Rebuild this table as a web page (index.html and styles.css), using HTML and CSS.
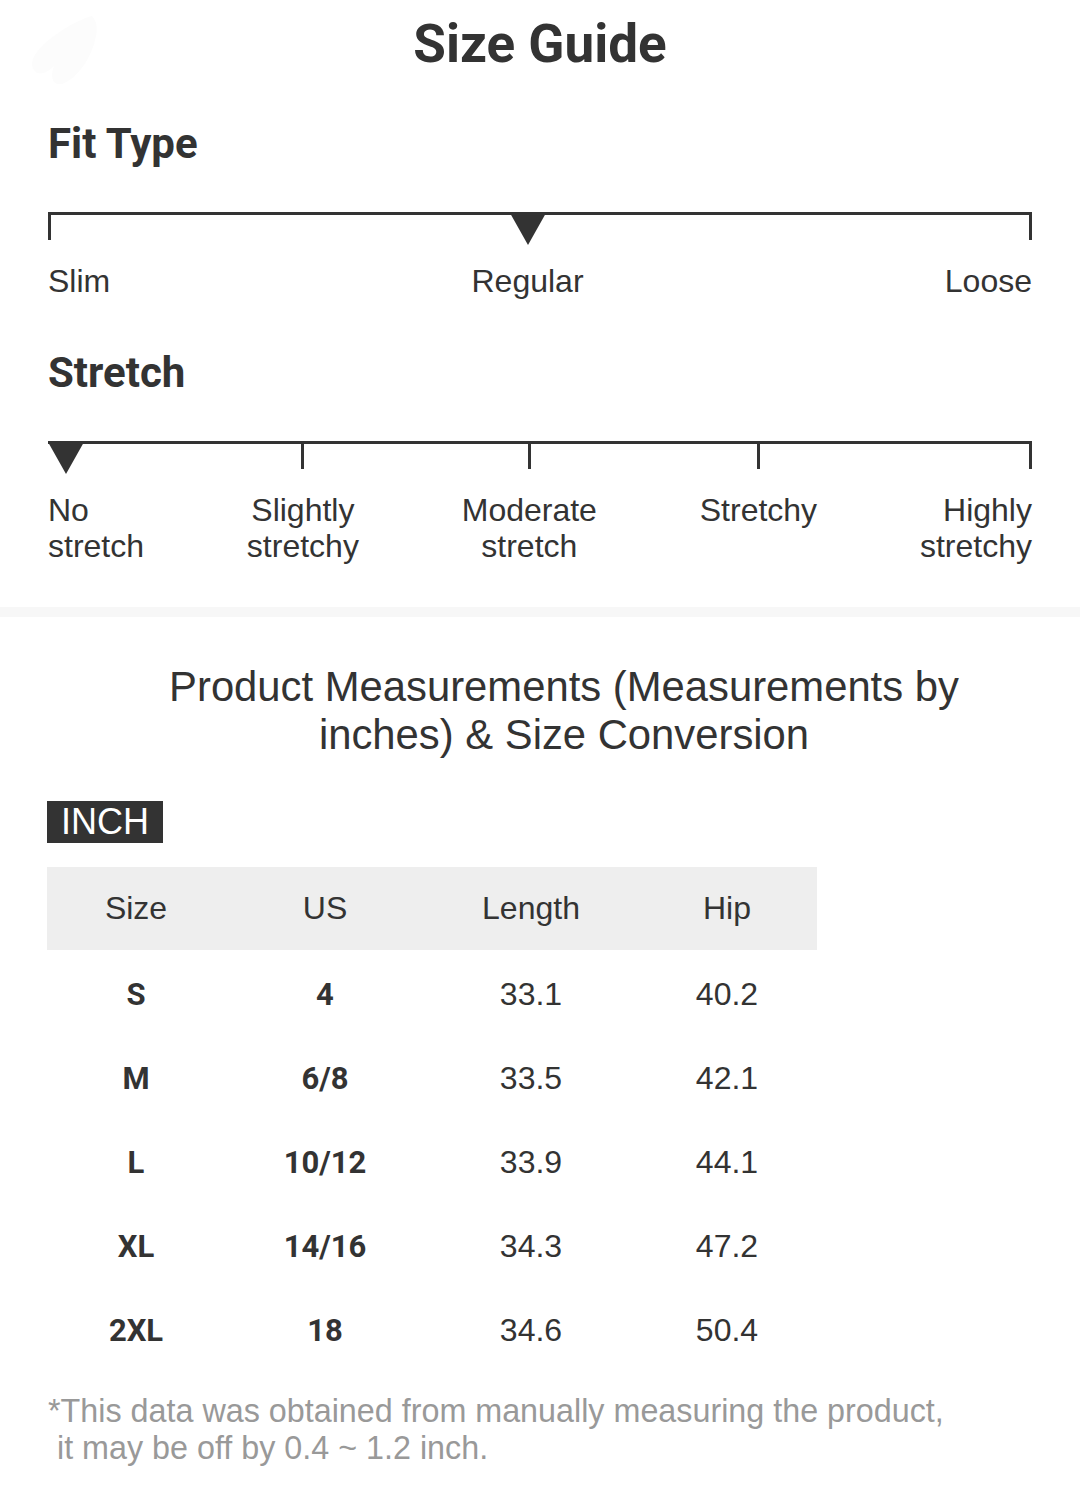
FILE: index.html
```html
<!DOCTYPE html>
<html lang="en">
<head>
<meta charset="utf-8">
<title>Size Guide</title>
<link rel="stylesheet" href="styles.css">
</head>
<body>
<div class="page">
  <svg class="ghost" width="80" height="80" viewBox="0 0 80 80" aria-hidden="true">
    <path d="M70 2 C55 6 35 18 20 32 C10 42 8 50 12 56 C16 62 24 60 32 52 C28 62 30 72 40 70 C52 66 66 50 72 30 C76 18 76 8 70 2 Z" fill="#fcfcfc"/>
  </svg>

  <section class="guide">
    <h1 class="title">Size Guide</h1>

    <h2 class="heading heading-fit">Fit Type</h2>
    <div class="scale">
      <div class="item start">
        <div class="marker"><span class="tick"></span></div>
        <div class="label">Slim</div>
      </div>
      <div class="item mid">
        <div class="marker"><span class="arrow"></span></div>
        <div class="label">Regular</div>
      </div>
      <div class="item end">
        <div class="marker"><span class="tick"></span></div>
        <div class="label">Loose</div>
      </div>
    </div>

    <h2 class="heading heading-stretch">Stretch</h2>
    <div class="scale">
      <div class="item start">
        <div class="marker"><span class="arrow"></span></div>
        <div class="label">No<br>stretch</div>
      </div>
      <div class="item mid">
        <div class="marker"><span class="tick"></span></div>
        <div class="label">Slightly<br>stretchy</div>
      </div>
      <div class="item mid">
        <div class="marker"><span class="tick"></span></div>
        <div class="label">Moderate<br>stretch</div>
      </div>
      <div class="item mid">
        <div class="marker"><span class="tick"></span></div>
        <div class="label">Stretchy</div>
      </div>
      <div class="item end">
        <div class="marker"><span class="tick"></span></div>
        <div class="label">Highly<br>stretchy</div>
      </div>
    </div>
  </section>

  <div class="band"></div>

  <section class="measure">
    <h2 class="measure-title">Product Measurements (Measurements by<br>inches) &amp; Size Conversion</h2>

    <div class="unit">INCH</div>

    <table class="sizes">
      <colgroup>
        <col class="c1"><col class="c2"><col class="c3"><col class="c4">
      </colgroup>
      <thead>
        <tr><th>Size</th><th>US</th><th>Length</th><th>Hip</th></tr>
      </thead>
      <tbody>
        <tr><td class="b">S</td><td class="b">4</td><td>33.1</td><td>40.2</td></tr>
        <tr><td class="b">M</td><td class="b">6/8</td><td>33.5</td><td>42.1</td></tr>
        <tr><td class="b">L</td><td class="b">10/12</td><td>33.9</td><td>44.1</td></tr>
        <tr><td class="b">XL</td><td class="b">14/16</td><td>34.3</td><td>47.2</td></tr>
        <tr><td class="b">2XL</td><td class="b">18</td><td>34.6</td><td>50.4</td></tr>
      </tbody>
    </table>

    <p class="note">*This data was obtained from manually measuring the product,<br>&nbsp;it may be off by 0.4 ~ 1.2 inch.</p>
  </section>
</div>
</body>
</html>
```

FILE: styles.css
```css
html, body {
  margin: 0;
  padding: 0;
  background: #fff;
}

body {
  font-family: "Liberation Sans", Arial, sans-serif;
  color: #333;
}

.page {
  position: relative;
  width: 1080px;
  min-height: 1492px;
}

.ghost {
  position: absolute;
  left: 22px;
  top: 14px;
}

.guide {
  padding: 12px 48px 0 48px;
}

.title {
  margin: 0;
  font-family: Roboto, "Liberation Sans", sans-serif;
  font-weight: 700;
  font-size: 53px;
  line-height: 64px;
  text-align: center;
  color: #333;
}

.heading {
  margin: 0;
  font-family: Roboto, "Liberation Sans", sans-serif;
  font-weight: 700;
  font-size: 42px;
  line-height: 48px;
  color: #333;
}

.heading-fit {
  margin-top: 44px;
}

.heading-stretch {
  margin-top: 50px;
}

.scale {
  margin-top: 44px;
  border-top: 3px solid #333;
  display: flex;
  justify-content: space-between;
}

.item {
  display: flex;
  flex-direction: column;
}

.item.start {
  align-items: flex-start;
  text-align: left;
}

.item.mid {
  align-items: center;
  text-align: center;
}

.item.end {
  align-items: flex-end;
  text-align: right;
}

.marker {
  height: 30px;
  display: flex;
  align-items: flex-start;
}

.tick {
  display: block;
  width: 3px;
  height: 25px;
  background: #333;
}

.arrow {
  display: block;
  width: 0;
  height: 0;
  margin-top: -2px;
  border-left: 18px solid transparent;
  border-right: 18px solid transparent;
  border-top: 32px solid #333;
}

.label {
  padding-top: 18px;
  font-size: 32px;
  line-height: 36px;
  color: #333;
}

.band {
  margin-top: 43px;
  height: 10px;
  background: #f7f7f7;
}

.measure {
  padding: 46px 0 0 48px;
}

.measure-title {
  margin: 0;
  font-weight: 400;
  font-size: 41.8px;
  line-height: 48px;
  text-align: center;
  color: #333;
}

.unit {
  display: inline-block;
  margin-top: 42px;
  margin-left: -1px;
  padding: 0 14px;
  height: 42px;
  line-height: 42px;
  font-size: 36px;
  background: #333;
  color: #fff;
}

.sizes {
  display: table;
  margin-top: 24px;
  margin-left: -1px;
  width: 770px;
  border-collapse: collapse;
  table-layout: fixed;
}

.c1 { width: 178px; }
.c2 { width: 200px; }
.c3 { width: 212px; }
.c4 { width: 180px; }

.sizes th {
  height: 83px;
  padding: 0;
  background: #eee;
  font-weight: 400;
  font-size: 32px;
  color: #333;
  text-align: center;
}

.sizes td {
  height: 80px;
  padding: 4px 0 0 0;
  font-size: 32px;
  color: #333;
  text-align: center;
}

.sizes td.b {
  font-family: Roboto, "Liberation Sans", sans-serif;
  font-weight: 700;
  font-size: 31px;
}

.note {
  margin: 23px 0 0 0;
  font-size: 32.3px;
  line-height: 37px;
  color: #999;
}
```
